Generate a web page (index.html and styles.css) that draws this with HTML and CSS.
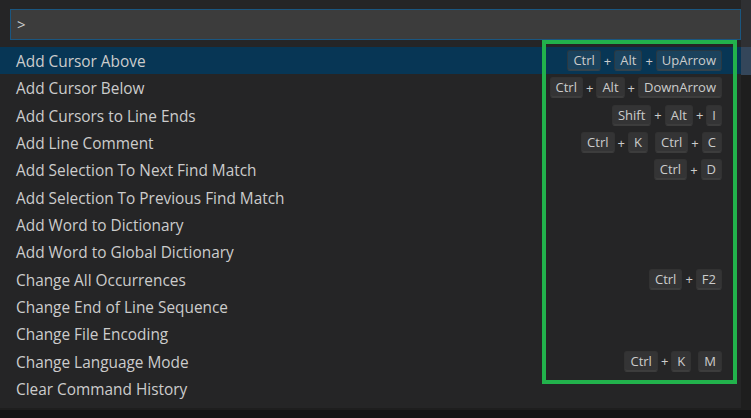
FILE: index.html
```html
<!DOCTYPE html>
<html>
<head>
<meta charset="utf-8">
<link rel="stylesheet" href="styles.css">
</head>
<body>
<div class="stage">
  <div class="widget">
    <div class="input">&gt;</div>
    <ul class="list">
      <li class="row selected"><span class="label">Add Cursor Above</span><span class="keys"><span class="chord"><kbd>Ctrl</kbd><i>+</i><kbd>Alt</kbd><i>+</i><kbd>UpArrow</kbd></span></span></li>
      <li class="row"><span class="label">Add Cursor Below</span><span class="keys"><span class="chord"><kbd>Ctrl</kbd><i>+</i><kbd>Alt</kbd><i>+</i><kbd>DownArrow</kbd></span></span></li>
      <li class="row"><span class="label">Add Cursors to Line Ends</span><span class="keys"><span class="chord"><kbd>Shift</kbd><i>+</i><kbd>Alt</kbd><i>+</i><kbd>I</kbd></span></span></li>
      <li class="row"><span class="label">Add Line Comment</span><span class="keys"><span class="chord"><kbd>Ctrl</kbd><i>+</i><kbd>K</kbd></span><span class="chord"><kbd>Ctrl</kbd><i>+</i><kbd>C</kbd></span></span></li>
      <li class="row"><span class="label">Add Selection To Next Find Match</span><span class="keys"><span class="chord"><kbd>Ctrl</kbd><i>+</i><kbd>D</kbd></span></span></li>
      <li class="row"><span class="label">Add Selection To Previous Find Match</span></li>
      <li class="row"><span class="label">Add Word to Dictionary</span></li>
      <li class="row"><span class="label">Add Word to Global Dictionary</span></li>
      <li class="row"><span class="label">Change All Occurrences</span><span class="keys"><span class="chord"><kbd>Ctrl</kbd><i>+</i><kbd>F2</kbd></span></span></li>
      <li class="row"><span class="label">Change End of Line Sequence</span></li>
      <li class="row"><span class="label">Change File Encoding</span></li>
      <li class="row"><span class="label">Change Language Mode</span><span class="keys"><span class="chord"><kbd>Ctrl</kbd><i>+</i><kbd>K</kbd></span><span class="chord"><kbd>M</kbd></span></span></li>
      <li class="row"><span class="label">Clear Command History</span></li>
    </ul>
  </div>
  <div class="highlight"></div>
</div>
</body>
</html>
```
FILE: styles.css
```css
html, body {
  margin: 0;
  padding: 0;
}
body {
  width: 751px;
  height: 418px;
  overflow: hidden;
  background: #131313;
  font-family: "Open Sans", "Noto Sans", sans-serif;
}
.stage {
  position: relative;
  width: 751px;
  height: 418px;
  background:
    linear-gradient(#2f3033, #2f3033) 741px 0 / 10px 47px no-repeat,
    linear-gradient(#34465a, #34465a) 741px 47px / 10px 28px no-repeat,
    linear-gradient(#1e1e1e, #1e1e1e) 0 0 / 751px 410px no-repeat;
}
.widget {
  width: 741px;
  height: 408px;
  background: #252526;
  padding-top: 9px;
  box-sizing: border-box;
  display: flex;
  flex-direction: column;
}
.input {
  margin-left: 10px;
  height: 31px;
  box-sizing: border-box;
  background: #3c3c3c;
  border: 1px solid #1a5680;
  color: #cccccc;
  font-size: 15px;
  line-height: 29px;
  padding-left: 6px;
}
.list {
  list-style: none;
  margin: 7px 0 0 0;
  padding: 0;
}
.row {
  height: 27.33px;
  box-sizing: border-box;
  display: flex;
  align-items: center;
  justify-content: space-between;
  padding: 2px 16px 0 16px;
  color: #cccccc;
  font-size: 15.4px;
}
.row.selected {
  background: #073655;
}
.label {
  white-space: nowrap;
}
.keys {
  display: flex;
  gap: 7px;
  margin-right: 3px;
  margin-top: -2px;
}
.chord {
  display: flex;
  align-items: center;
}
kbd {
  font-family: "Open Sans", "Noto Sans", sans-serif;
  font-size: 13px;
  color: #cccccc;
  background: rgba(128, 128, 128, 0.17);
  border: 1px solid rgba(51, 51, 51, 0.6);
  border-bottom-color: rgba(68, 68, 68, 0.6);
  box-shadow: inset 0 -1px 0 rgba(68, 68, 68, 0.6);
  border-radius: 3px;
  height: 21px;
  line-height: 19px;
  box-sizing: border-box;
  padding: 0 5px;
}
.chord i {
  font-style: normal;
  font-size: 13px;
  color: #cccccc;
  padding: 0 3px;
}
.highlight {
  position: absolute;
  left: 542px;
  top: 40px;
  width: 195px;
  height: 344px;
  box-sizing: border-box;
  border: 4px solid #22b24c;
}
```
